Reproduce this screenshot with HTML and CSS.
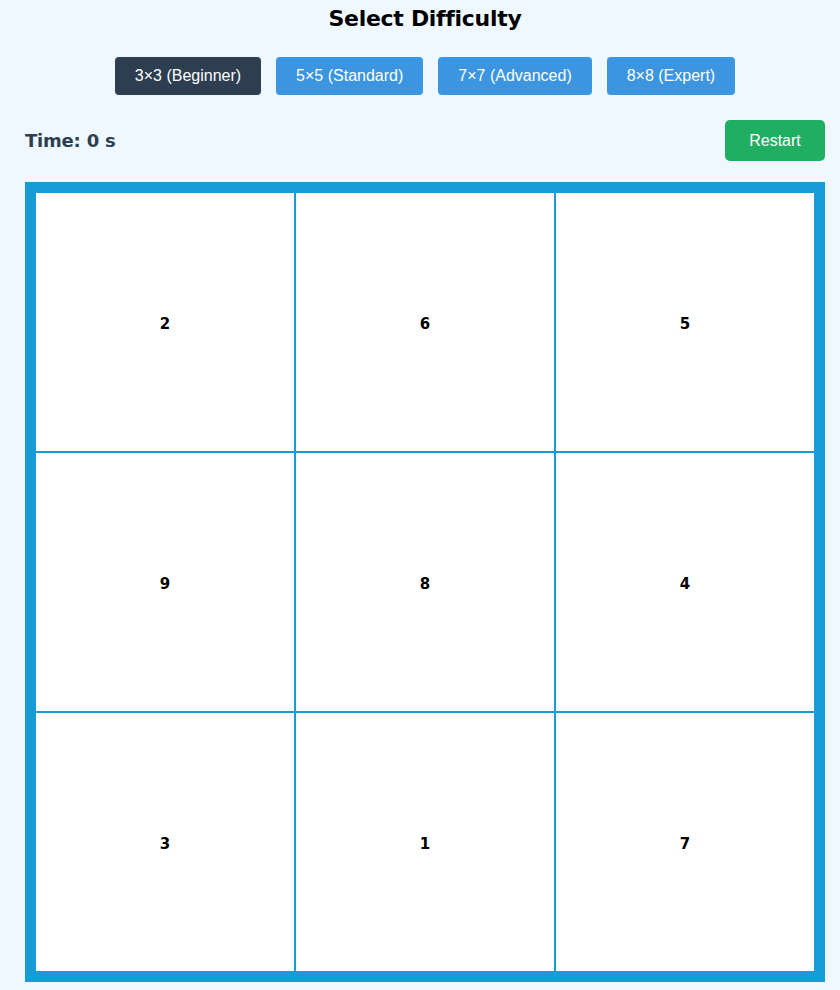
FILE: index.html
```html
<!DOCTYPE html>
<html>
<head>
<meta charset="utf-8">
<link rel="stylesheet" href="styles.css">
</head>
<body>
<div class="app">
  <h2 class="title">Select Difficulty</h2>
  <div class="levels">
    <button class="level active">3×3 (Beginner)</button>
    <button class="level">5×5 (Standard)</button>
    <button class="level">7×7 (Advanced)</button>
    <button class="level">8×8 (Expert)</button>
  </div>
  <div class="bar">
    <div class="time">Time: 0 s</div>
    <button class="restart">Restart</button>
  </div>
  <div class="board">
    <div class="cell">2</div>
    <div class="cell">6</div>
    <div class="cell">5</div>
    <div class="cell">9</div>
    <div class="cell">8</div>
    <div class="cell">4</div>
    <div class="cell">3</div>
    <div class="cell">1</div>
    <div class="cell">7</div>
  </div>
</div>
</body>
</html>
```
FILE: styles.css
```css
html, body {
  margin: 0;
  padding: 0;
  background: #f0f8ff;
}
.app {
  width: 800px;
  margin-left: 25px;
  display: flex;
  flex-direction: column;
}
.title {
  margin: 5px 0 0;
  text-align: center;
  font-family: "DejaVu Sans", Verdana, sans-serif;
  font-size: 22px;
  font-weight: bold;
  color: #000;
  line-height: 28px;
  letter-spacing: -0.3px;
}
.levels {
  display: flex;
  justify-content: center;
  gap: 15px;
  margin-top: 24px;
}
.level {
  height: 38px;
  padding: 0 20px;
  border: none;
  border-radius: 4px;
  background: #3b95e0;
  color: #fff;
  font-family: "Liberation Sans", Arial, sans-serif;
  font-size: 16px;
}
.level.active {
  background: #2c3e50;
}
.bar {
  display: flex;
  justify-content: space-between;
  align-items: center;
  margin-top: 25px;
}
.time {
  font-family: "DejaVu Sans", Verdana, sans-serif;
  font-weight: bold;
  font-size: 18px;
  letter-spacing: -0.2px;
  color: #2c3e50;
}
.restart {
  width: 100px;
  height: 41px;
  border: none;
  border-radius: 5px;
  background: #1fae62;
  color: #fff;
  font-family: "Liberation Sans", Arial, sans-serif;
  font-size: 16px;
}
.board {
  margin-top: 21px;
  width: 800px;
  height: 800px;
  box-sizing: border-box;
  padding: 11px;
  background: #179cd8;
  display: grid;
  grid-template-columns: repeat(3, 1fr);
  grid-template-rows: repeat(3, 1fr);
  gap: 2px;
}
.cell {
  background: #fff;
  display: flex;
  align-items: center;
  justify-content: center;
  padding-top: 3px;
  font-family: "DejaVu Sans", Verdana, sans-serif;
  font-weight: bold;
  font-size: 15px;
  color: #000;
}
```
